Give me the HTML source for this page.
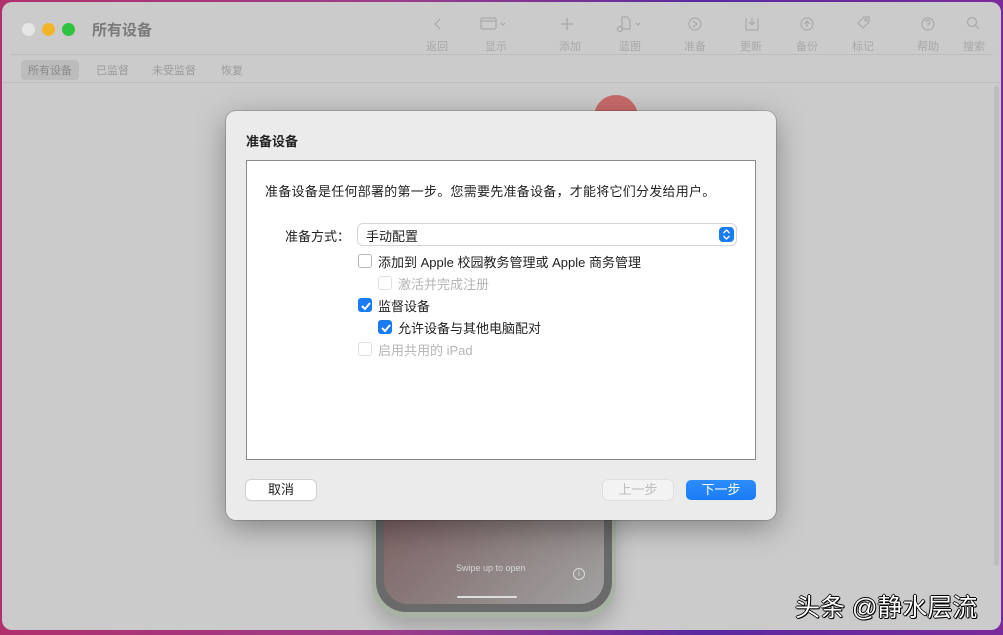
<!DOCTYPE html>
<html><head><meta charset="utf-8"><style>
*{margin:0;padding:0;box-sizing:border-box}
body{width:1003px;height:635px;overflow:hidden;background:linear-gradient(90deg,#b0306e 0%,#9b3c8a 40%,#5a2aa0 70%,#7a2a9a 100%);font-family:"Liberation Sans","Noto Sans CJK SC",sans-serif;position:relative}
.win{position:absolute;left:2px;top:2px;width:999px;height:628px;background:#cbcbcb;border-radius:10px;overflow:hidden}
.tl{position:absolute;top:21px;width:13px;height:13px;border-radius:50%}
.title{position:absolute;left:90px;top:17px;font-size:15px;font-weight:bold;color:#7a7a7a}
.tb{position:absolute;top:36px;font-size:11px;color:#a8a8a8;text-align:center;width:40px}
.sep{position:absolute;left:8px;right:8px;height:1px;background:#bdbdbd}
.tab{position:absolute;top:58px;font-size:11px;color:#9a9a9a;padding:2px 7px;border-radius:4px}
.dlg{position:absolute;left:226px;top:111px;width:550px;height:409px;background:#ebebeb;border-radius:10px;box-shadow:0 8px 30px rgba(0,0,0,.35),0 0 0 1px rgba(0,0,0,.15)}
.box{position:absolute;left:20px;top:49px;width:510px;height:300px;background:#fff;border:1px solid #8a8a8a}
.t{position:absolute;font-size:13px;color:#222;white-space:nowrap}
.cb{position:absolute;width:14px;height:14px;border:1px solid #b8b8b8;border-radius:3px;background:#fff}
.cb.on{background:#1a7cf5;border-color:#1a7cf5}
.cb.dis{border-color:#e0e0e0}
.btn{position:absolute;top:369px;width:70px;height:20px;border-radius:5px;font-size:13px;text-align:center;line-height:20px}
</style></head><body>
<div class="win">
 <div class="tl" style="left:20px;background:#e6e6e6"></div>
 <div class="tl" style="left:40px;background:#f4b42a"></div>
 <div class="tl" style="left:60px;background:#2ec440"></div>
 <div class="title">所有设备</div>
 <svg style="position:absolute;left:0;top:0" width="999" height="50" fill="none" stroke="#a9a9a9" stroke-width="1.2">
  <path d="M438 17l-5 5 5 5"/>
  <rect x="479" y="16" width="15" height="11" rx="1.5"/><path d="M479 19h15M499 21l2 2 2-2"/>
  <path d="M565 16v12M559 22h12"/>
  <path d="M620 15h5l3 3v9h-8z M634 21l2 2 2-2"/><circle cx="618" cy="27" r="2.5"/>
  <circle cx="693" cy="22" r="6"/><path d="M691 19l4 3-4 3"/>
  <path d="M745 17h-1v11h12v-11h-1M750 16v7M747 20l3 3 3-3"/>
  <circle cx="805" cy="22" r="6"/><path d="M805 25v-6M802 22l3-3 3 3"/>
  <path d="M856 21l6-6h5v5l-6 6z"/><circle cx="864" cy="18" r="1"/>
  <circle cx="926" cy="22" r="6"/><path d="M924 20a2 2 0 1 1 2 2v1.5M926 25v.5"/>
  <circle cx="970" cy="20" r="4.5"/><path d="M973 23l4 4"/>
 </svg>
 <div class="tb" style="left:415px">返回</div>
 <div class="tb" style="left:474px">显示</div>
 <div class="tb" style="left:548px">添加</div>
 <div class="tb" style="left:608px">蓝图</div>
 <div class="tb" style="left:673px">准备</div>
 <div class="tb" style="left:729px">更新</div>
 <div class="tb" style="left:785px">备份</div>
 <div class="tb" style="left:841px">标记</div>
 <div class="tb" style="left:906px">帮助</div>
 <div class="tb" style="left:952px">搜索</div>
 <div class="sep" style="top:52px"></div>
 <div class="tab" style="left:19px;background:#bcbcbc;color:#8a8a8a">所有设备</div>
 <div class="tab" style="left:87px">已监督</div>
 <div class="tab" style="left:143px">未受监督</div>
 <div class="tab" style="left:212px">恢复</div>
 <div style="position:absolute;left:0;right:0;top:80px;height:1px;background:#bdbdbd"></div>
 <div style="position:absolute;left:992px;top:84px;width:5px;height:480px;background:#bdbdbd;border-radius:3px"></div>
 <div style="position:absolute;left:592px;top:93px;width:44px;height:44px;border-radius:50%;background:#c86a6a"></div>
 <div style="position:absolute;left:370px;top:470px;width:244px;height:146px;border-radius:0 0 34px 34px;background:#a9b3a5;box-shadow:0 10px 20px rgba(0,0,0,.2)"></div>
 <div style="position:absolute;left:374px;top:470px;width:236px;height:140px;border-radius:0 0 30px 30px;background:#6a6a6a"></div>
 <div style="position:absolute;left:382px;top:470px;width:220px;height:132px;border-radius:0 0 24px 24px;background:linear-gradient(135deg,#7a5a5c 0%,#8a7a7a 45%,#a2a2a2 100%)"></div>
 <div style="position:absolute;left:454px;top:561px;font-size:9px;color:#d6d6d6">Swipe up to open</div>
 <div style="position:absolute;left:571px;top:566px;width:12px;height:12px;border:1px solid #ddd;border-radius:50%;font-size:8px;color:#ddd;text-align:center;line-height:10px">i</div>
 <div style="position:absolute;left:455px;top:594px;width:60px;height:2px;background:#ddd;border-radius:1px"></div>
</div>
<div style="position:absolute;left:795px;top:588px;font-size:25px;color:#fff;white-space:nowrap;text-shadow:1px 1px 0 #000,-1px 0 0 #000,0 -1px 0 #000,1px 0 0 #000,0 1px 0 #000">头条 @静水层流</div>
<div class="dlg">
 <div class="t" style="left:20px;top:20px;font-weight:bold">准备设备</div>
 <div class="box"></div>
 <div class="t" style="left:39px;top:70px;letter-spacing:0.25px">准备设备是任何部署的第一步。您需要先准备设备，才能将它们分发给用户。</div>
 <div class="t" style="left:59px;top:115px">准备方式：</div>
 <div style="position:absolute;left:132px;top:113px;width:378px;height:21px;background:#fff;border-radius:5px;box-shadow:0 0 0 1px #d6d6d6,0 1px 1px rgba(0,0,0,.1)"></div>
 <div class="t" style="left:140px;top:115px">手动配置</div>
 <div style="position:absolute;left:493px;top:116px;width:15px;height:15px;background:#1a7cf5;border-radius:4px"><svg width="15" height="15" fill="none" stroke="#fff" stroke-width="1.3"><path d="M4.5 6l3-3 3 3M4.5 9l3 3 3-3"/></svg></div>
 <div class="cb" style="left:132px;top:143px"></div><div class="t" style="left:152px;top:141px">添加到 Apple 校园教务管理或 Apple 商务管理</div>
 <div class="cb dis" style="left:152px;top:165px"></div><div class="t" style="left:172px;top:163px;color:#b5b5b5">激活并完成注册</div>
 <div class="cb on" style="left:132px;top:187px"><svg width="14" height="14" fill="none" stroke="#fff" stroke-width="2"><path d="M3 7l3 3 5-6"/></svg></div><div class="t" style="left:152px;top:185px">监督设备</div>
 <div class="cb on" style="left:152px;top:209px"><svg width="14" height="14" fill="none" stroke="#fff" stroke-width="2"><path d="M3 7l3 3 5-6"/></svg></div><div class="t" style="left:172px;top:207px">允许设备与其他电脑配对</div>
 <div class="cb dis" style="left:132px;top:231px"></div><div class="t" style="left:152px;top:229px;color:#b5b5b5">启用共用的 iPad</div>
 <div class="btn" style="left:20px;background:#fff;color:#222;box-shadow:0 0 0 1px #d0d0d0,0 1px 1px rgba(0,0,0,.15)">取消</div>
 <div class="btn" style="left:377px;background:#f3f3f3;color:#bdbdbd;box-shadow:0 0 0 1px #e0e0e0">上一步</div>
 <div class="btn" style="left:460px;background:linear-gradient(#2e8cff,#1a7cf5);color:#fff">下一步</div>
</div>
</body></html>
